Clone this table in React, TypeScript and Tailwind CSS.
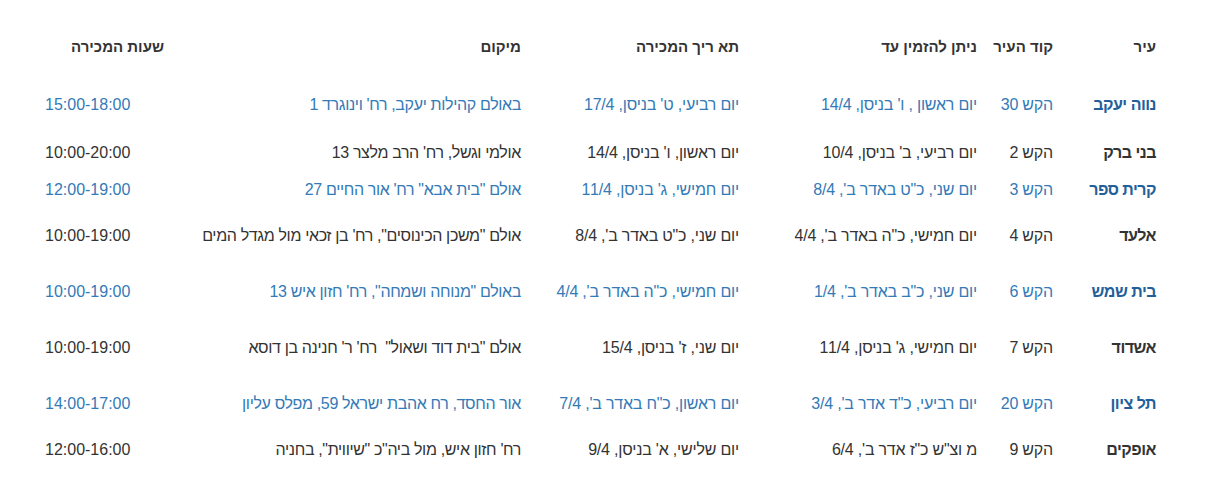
const rows = [
  {city: 'נווה יעקב', code: 'הקש 30', until: 'יום ראשון , ו\' בניסן, 14/4', date: 'יום רביעי, ט\' בניסן, 17/4', place: 'באולם קהילות יעקב, רח\' וינוגרד 1', hours: '15:00-18:00', blue: true, h: 'h-[48px]'},
  {city: 'בני ברק', code: 'הקש 2', until: 'יום רביעי, ב\' בניסן, 10/4', date: 'יום ראשון, ו\' בניסן, 14/4', place: 'אולמי וגשל, רח\' הרב מלצר 13', hours: '10:00-20:00', blue: false, h: 'h-[37px]'},
  {city: 'קרית ספר', code: 'הקש 3', until: 'יום שני, כ"ט באדר ב\', 8/4', date: 'יום חמישי, ג\' בניסן, 11/4', place: 'אולם "בית אבא" רח\' אור החיים 27', hours: '12:00-19:00', blue: true, h: 'h-[46px]'},
  {city: 'אלעד', code: 'הקש 4', until: 'יום חמישי, כ"ה באדר ב\', 4/4', date: 'יום שני, כ"ט באדר ב\', 8/4', place: 'אולם "משכן הכינוסים", רח\' בן זכאי מול מגדל המים', hours: '10:00-19:00', blue: false, h: 'h-[56px]'},
  {city: 'בית שמש', code: 'הקש 6', until: 'יום שני, כ"ב באדר ב\', 1/4', date: 'יום חמישי, כ"ה באדר ב\', 4/4', place: 'באולם "מנוחה ושמחה", רח\' חזון איש 13', hours: '10:00-19:00', blue: true, h: 'h-[56px]'},
  {city: 'אשדוד', code: 'הקש 7', until: 'יום חמישי, ג\' בניסן, 11/4', date: 'יום שני, ז\' בניסן, 15/4', place: 'אולם "בית דוד ושאול"  רח\' ר\' חנינה בן דוסא', hours: '10:00-19:00', blue: false, h: 'h-[56px]'},
  {city: 'תל ציון', code: 'הקש 20', until: 'יום רביעי, כ"ד אדר ב\', 3/4', date: 'יום ראשון, כ"ח באדר ב\', 7/4', place: 'אור החסד, רח אהבת ישראל 59, מפלס עליון', hours: '14:00-17:00', blue: true, h: 'h-[46px]'},
  {city: 'אופקים', code: 'הקש 9', until: 'מ וצ"ש כ"ז אדר ב\', 6/4', date: 'יום שלישי, א\' בניסן, 9/4', place: 'רח\' חזון איש, מול ביה"כ "שיווית", בחניה', hours: '12:00-16:00', blue: false, h: 'h-[40px]'},
];

export default function App() {
  return (
    <div className="bg-white w-[1207px] h-[484px] pt-[37px] pl-[37px] font-['Liberation_Sans',Arial,sans-serif]">
      <table dir="rtl" className="table-fixed w-[1127px] border-collapse">
        <colgroup>
          <col className="w-[103px]" />
          <col className="w-[76px]" />
          <col className="w-[238px]" />
          <col className="w-[218px]" />
          <col className="w-[357px]" />
          <col className="w-[135px]" />
        </colgroup>
        <thead>
          <tr className="h-[58px] text-[15px] font-bold text-[#333] leading-[20px]">
            <th className="align-top text-right px-2">עיר</th>
            <th className="align-top text-right px-2">קוד העיר</th>
            <th className="align-top text-right px-2">ניתן להזמין עד</th>
            <th className="align-top text-right px-2">תא ריך המכירה</th>
            <th className="align-top text-right px-2">מיקום</th>
            <th className="align-top text-right px-2">שעות המכירה</th>
          </tr>
        </thead>
        <tbody>
          {rows.map((r) => (
            <tr key={r.city} className={`${r.h} text-[16px] leading-[20px] ${r.blue ? 'text-[#337ab7]' : 'text-[#333]'}`}>
              <td className={`align-top text-right px-2 font-bold tracking-[-0.5px] ${r.blue ? 'text-[#23609a]' : 'text-[#333]'}`}>{r.city}</td>
              <td className="align-top text-right px-2 whitespace-nowrap tracking-[-0.2px]">{r.code}</td>
              <td className="align-top text-right px-2 whitespace-nowrap tracking-[-0.2px]">{r.until}</td>
              <td className="align-top text-right px-2 whitespace-nowrap tracking-[-0.2px]">{r.date}</td>
              <td className="align-top text-right px-2 whitespace-pre tracking-[-0.35px]">{r.place}</td>
              <td className="align-top text-left px-2" dir="ltr">{r.hours}</td>
            </tr>
          ))}
        </tbody>
      </table>
    </div>
  );
}
